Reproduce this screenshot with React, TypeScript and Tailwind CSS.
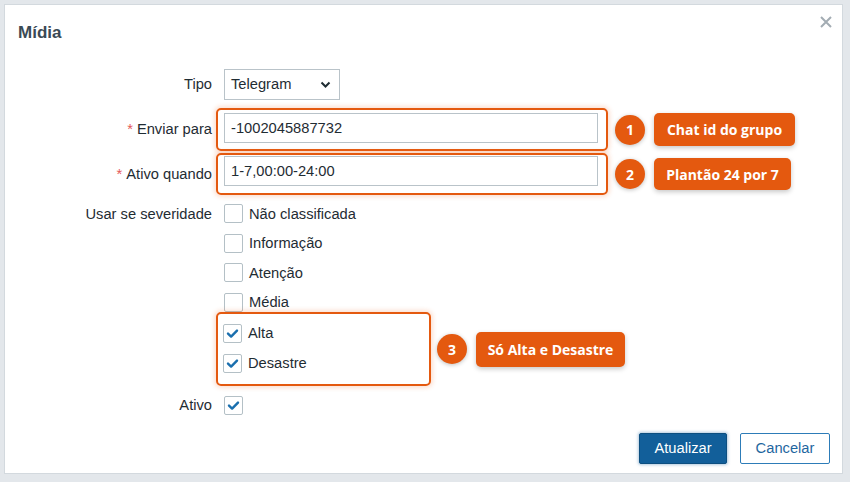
import { ReactNode } from "react";

const ORANGE = "bg-[#e4590f]";

const Label = ({ children, required }: { children: ReactNode; required?: boolean }) => (
  <div className="w-[207px] shrink-0 text-right text-[14.7px] text-[#1f2c33]">
    {required && <span className="text-[#e45959] mr-1">*</span>}
    {children}
  </div>
);

const CheckBox = ({ checked }: { checked?: boolean }) => (
  <span className="flex h-[19px] w-[19px] shrink-0 items-center justify-center rounded-[2px] border border-[#b4c0c6] bg-white">
    {checked && (
      <svg width="13" height="13" viewBox="0 0 13 13" fill="none">
        <path d="M2 6.6 L5.1 9.6 L11 3.6" stroke="#1a6fae" strokeWidth="2.4" strokeLinecap="round" strokeLinejoin="round" />
      </svg>
    )}
  </span>
);

const CheckRow = ({ label, checked, h = "h-[29.5px]" }: { label: string; checked?: boolean; h?: string }) => (
  <div className={`flex items-center gap-[6px] ${h}`}>
    <CheckBox checked={checked} />
    <span className="text-[14.7px] text-[#1f2c33]">{label}</span>
  </div>
);

const Step = ({ n }: { n: number }) => (
  <span
    className={`flex h-[30px] w-[30px] shrink-0 items-center justify-center rounded-full ${ORANGE} text-[14px] font-bold text-white shadow-[0_1px_4px_rgba(0,0,0,0.25)]`}
    style={{ fontFamily: '"Open Sans", sans-serif' }}
  >
    {n}
  </span>
);

const Tag = ({ children, className }: { children: ReactNode; className: string }) => (
  <span
    className={`flex items-center justify-center rounded-[5px] ${ORANGE} text-[14px] font-bold text-white shadow-[0_2px_5px_rgba(0,0,0,0.22)] ${className}`}
    style={{ fontFamily: '"Open Sans", sans-serif' }}
  >
    {children}
  </span>
);

const Highlight = ({ children, className }: { children: ReactNode; className: string }) => (
  <div
    className={`-ml-2 rounded-[5px] border-2 border-[#e4590f] shadow-[0_0_4px_2px_rgba(240,120,60,0.22)] ${className}`}
  >
    {children}
  </div>
);

const TextInput = ({ value }: { value: string }) => (
  <div className="flex h-[30px] w-[374px] items-center border border-[#b9c3c9] bg-white px-[6px] text-[14.7px] text-[#1f2c33]">
    {value}
  </div>
);

export default function App() {
  return (
    <div
      className="h-[482px] w-[850px] bg-[#e3e7eb] p-[4px]"
      style={{ fontFamily: '"Liberation Sans", Arial, sans-serif' }}
    >
      <div className="relative flex h-[470px] w-[839px] flex-col border border-[#d3d9de] bg-white">
        <button className="absolute right-[8px] top-[9px] p-[2px]">
          <svg width="12" height="12" viewBox="0 0 12 12">
            <path d="M1 1 L11 11 M11 1 L1 11" stroke="#a3acb3" strokeWidth="2" />
          </svg>
        </button>

        <div className="flex h-[55px] items-center pl-[13px]">
          <h2 className="text-[17px] font-bold text-[#3b4a55]">Mídia</h2>
        </div>

        <div className="flex flex-col pt-[9px]">
          {/* Tipo */}
          <div className="flex h-[31px] items-center">
            <Label>Tipo</Label>
            <div className="ml-3 flex h-[31px] w-[116px] items-center justify-between border border-[#b9c3c9] bg-white pl-[6px] pr-[8px] text-[14.7px] text-[#1f2c33]">
              Telegram
              <svg width="11" height="8" viewBox="0 0 11 8" fill="none">
                <path d="M1.5 1.5 L5.5 5.5 L9.5 1.5" stroke="#1f2c33" strokeWidth="2" />
              </svg>
            </div>
          </div>

          {/* Enviar para */}
          <div className="mt-[8px] flex items-center">
            <Label required>Enviar para</Label>
            <div className="ml-3 flex items-center">
              <Highlight className="h-[43px] w-[392px] pl-[6px] pt-[3px]">
                <TextInput value="-1002045887732" />
              </Highlight>
              <div className="ml-[7px] flex items-center gap-[9px]">
                <Step n={1} />
                <Tag className="h-[33px] w-[141px]">Chat id do grupo</Tag>
              </div>
            </div>
          </div>

          {/* Ativo quando */}
          <div className="mt-[2px] flex items-center">
            <Label required>Ativo quando</Label>
            <div className="ml-3 flex items-center">
              <Highlight className="h-[42px] w-[392px] pl-[6px] pt-[1px]">
                <TextInput value="1-7,00:00-24:00" />
              </Highlight>
              <div className="ml-[7px] flex items-center gap-[9px]">
                <Step n={2} />
                <Tag className="h-[32px] w-[137px]">Plantão 24 por 7</Tag>
              </div>
            </div>
          </div>

          {/* Severidade */}
          <div className="mt-[4px] flex items-start">
            <div className="flex h-[29.5px] items-center">
              <Label>Usar se severidade</Label>
            </div>
            <div className="ml-3 flex flex-col">
              <CheckRow label="Não classificada" />
              <CheckRow label="Informação" />
              <CheckRow label="Atenção" />
              <CheckRow label="Média" />
              <div className="-mt-[5px] flex items-center">
                <Highlight className="w-[215px] pb-[6px] pl-[5px] pt-[4px]">
                  <CheckRow label="Alta" checked h="h-[30px]" />
                  <CheckRow label="Desastre" checked h="h-[30px]" />
                </Highlight>
                <div className="ml-[6px] flex items-center gap-[9px]">
                  <Step n={3} />
                  <Tag className="h-[35px] w-[149px]">Só Alta e Desastre</Tag>
                </div>
              </div>
            </div>
          </div>

          {/* Ativo */}
          <div className="mt-[5px] flex h-[28px] items-center">
            <Label>Ativo</Label>
            <div className="ml-3">
              <CheckBox checked />
            </div>
          </div>
        </div>

        <div className="mt-[14px] flex justify-end gap-[13px] pr-[12px]">
          <button className="h-[31px] w-[88px] rounded-[2px] border border-[#0d4f80] bg-[#125f9a] text-[14.7px] text-white shadow-[0_0_3px_1px_rgba(30,100,160,0.35)]">
            Atualizar
          </button>
          <button className="h-[31px] w-[90px] rounded-[2px] border border-[#2d7cb8] bg-white text-[14.7px] text-[#1f67a0]">
            Cancelar
          </button>
        </div>
      </div>
    </div>
  );
}
